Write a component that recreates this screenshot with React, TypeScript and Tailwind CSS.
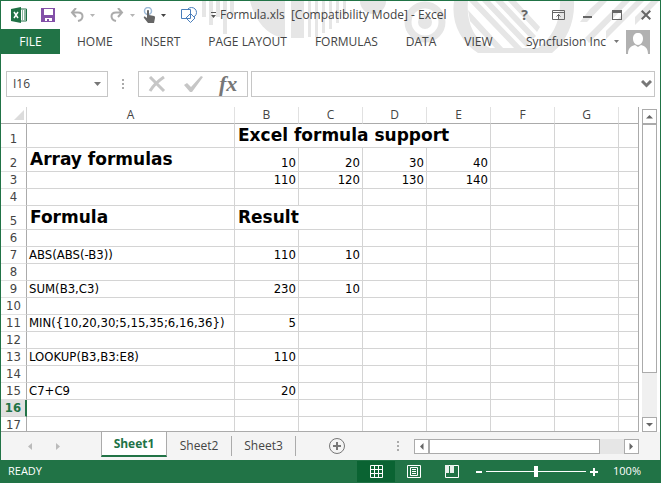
import type { ReactNode } from "react";

type Row = { n: number; h: string; cells: Record<string, string>; big?: string; from?: string; span?: number };

const COLS = ["A", "B", "C", "D", "E", "F", "G", ""];

const ROWS: Row[] = [
  { n: 1, h: "h-6", cells: { B: "Excel formula support" }, big: "B", from: "B", span: 4 },
  { n: 2, h: "h-6", cells: { A: "Array formulas", B: "10", C: "20", D: "30", E: "40" }, big: "A" },
  { n: 3, h: "h-[17px]", cells: { B: "110", C: "120", D: "130", E: "140" } },
  { n: 4, h: "h-[17px]", cells: {} },
  { n: 5, h: "h-6", cells: { A: "Formula", B: "Result" }, big: "AB", from: "B", span: 2 },
  { n: 6, h: "h-[17px]", cells: {} },
  { n: 7, h: "h-[17px]", cells: { A: "ABS(ABS(-B3))", B: "110", C: "10" } },
  { n: 8, h: "h-[17px]", cells: {} },
  { n: 9, h: "h-[17px]", cells: { A: "SUM(B3,C3)", B: "230", C: "10" } },
  { n: 10, h: "h-[17px]", cells: {} },
  { n: 11, h: "h-[17px]", cells: { A: "MIN({10,20,30;5,15,35;6,16,36})", B: "5" } },
  { n: 12, h: "h-[17px]", cells: {} },
  { n: 13, h: "h-[17px]", cells: { A: "LOOKUP(B3,B3:E8)", B: "110" } },
  { n: 14, h: "h-[17px]", cells: {} },
  { n: 15, h: "h-[17px]", cells: { A: "C7+C9", B: "20" } },
  { n: 16, h: "h-[17px]", cells: {} },
  { n: 17, h: "h-[17px]", cells: {} },
];

function SheetRow({ row }: { row: Row }) {
  const selected = row.n === 16;
  const cells: ReactNode[] = [];
  for (let i = 0; i < COLS.length; i++) {
    const col = COLS[i];
    const value = row.cells[col];
    const big = !!value && !!row.big?.includes(col);
    const span = row.from === col ? row.span ?? 1 : 1;
    cells.push(
      <td
        key={i}
        colSpan={span}
        className={`border-b border-[#d4d4d4] p-0 align-bottom whitespace-nowrap ${col ? "border-r" : ""}`}
      >
        <div
          className={
            big
              ? "px-[3px] font-['DejaVu_Sans',sans-serif] text-[17px] leading-[23px] font-bold"
              : col === "A"
                ? "px-0.5 text-[13px] leading-4"
                : "px-0.5 text-right text-[13px] leading-4"
          }
        >
          {value}
        </div>
      </td>,
    );
    i += span - 1;
  }
  return (
    <tr className={row.h}>
      <th
        scope="row"
        className={`border-b p-0 text-center align-bottom text-[13px] leading-4 ${
          selected
            ? "border-r-2 border-b-[#d4d4d4] border-r-[#217346] bg-[#e1e1e1] font-bold text-[#217346]"
            : "border-r border-b-[#e1e1e1] border-r-[#ababab] font-normal text-[#444]"
        }`}
      >
        {row.n}
      </th>
      {cells}
    </tr>
  );
}

function Decoration() {
  return (
    <svg className="absolute top-0 right-0 h-[52px] w-[460px]" viewBox="200 1 460 52" fill="#e6e6e6" aria-hidden="true">
      <path d="M202 1h4v16h-4zM209 1h4v24h-4zM216 1h4v16h-4zM223 1h4v33h-4zM230 1h4v14h-4z" />
      <path d="M250 1h35v37c-18-2-30-17-35-37zM291 1h13v37h-13z" />
      <path d="M308 1h3v36h-3zM315 1h3v36h-3zM322 1h3v32h-3zM329 1h3v28h-3zM336 1h3v22h-3zM343 1h3v15h-3z" />
      <circle cx="373" cy="1" r="13" />
      <circle cx="425" cy="22" r="17" fill="none" stroke="#e6e6e6" strokeWidth="7" />
      <circle cx="425" cy="22" r="7" />
      <path fillRule="evenodd" d="M454 1c-3 21 6 40 24 52h74c15-12 23-31 22-52h-14c1 20-8 37-22 47h-48c-17-9-24-27-22-47z" />
      <path d="M468 10l36 39h-8l-26-28zM469 1h8l46 48h-8zM482 1h8l40 42-4 4zM495 1h8l33 35-4 4zM508 1h8l24 26-3 5z" />
      <path d="M590 9l9-8h8l-20 21h-7zM585 38l37-37h8l-41 42zM606 31l30-30h8l-38 38zM635 17l16-16h8l-24 24z" />
    </svg>
  );
}

function Caret({ color }: { color: string }) {
  return (
    <svg className="h-[3px] w-[5px]" viewBox="0 0 5 3" aria-hidden="true">
      <path d="M0 0h5L2.5 3z" fill={color} />
    </svg>
  );
}

function TitleBar() {
  return (
    <header className="relative flex h-7 shrink-0 items-center pr-[9px] pl-2.5 text-[#444]">
      <svg className="h-4 w-4" viewBox="0 0 16 16" role="img" aria-label="Excel">
        <path d="M0 2l10-2v16L0 14z" fill="#1f7145" />
        <path d="M10 2h5.500v12H10" fill="#fff" stroke="#1f7145" />
        <path d="M11 4h1M13 4h2M11 6h1M13 6h2M11 8h1M13 8h2M11 10h1M13 10h2M11 12h1M13 12h2" stroke="#1f7145" />
        <path d="M3 5l4 6M7 5l-4 6" stroke="#fff" strokeWidth="1.500" />
      </svg>
      <button aria-label="Save" className="ml-3.5">
        <svg className="h-3.5 w-3.5" viewBox="0 0 14 14">
          <path d="M0 0h14v14H0z" fill="#8350a8" />
          <path d="M3 1h9v6H3zM4 10h7v3H8v-2H6v2H4z" fill="#fff" />
        </svg>
      </button>
      <button aria-label="Undo" className="ml-[15px]">
        <svg className="h-3.5 w-3.5" viewBox="0 0 14 14" fill="none" stroke="#ababab" strokeWidth="2">
          <path d="M6 0L2 4.500 6 9M2 4.500h6c6 0 6 7 0 8.500" />
        </svg>
      </button>
      <button aria-label="Undo list" className="ml-1.5"><Caret color="#b5b5b5" /></button>
      <button aria-label="Redo" className="ml-[15px]">
        <svg className="h-3.5 w-3.5" viewBox="0 0 14 14" fill="none" stroke="#ababab" strokeWidth="2">
          <path d="M8 0l4 4.500L8 9M12 4.500H6c-6 0-6 7 0 8.500" />
        </svg>
      </button>
      <button aria-label="Redo list" className="ml-1.5"><Caret color="#b5b5b5" /></button>
      <button aria-label="Touch mode" className="ml-2">
        <svg className="h-4 w-3" viewBox="0 0 12 16">
          <circle cx="5" cy="4" r="3.500" fill="none" stroke="#9db9d6" strokeWidth="1.500" />
          <path d="M4 4c0-1.300 2-1.300 2 0v4l5 1c1 .3 1 1 1 2l-1 5H5L1 11c-.8-1 .5-2 1.500-1L4 11z" fill="#666" />
        </svg>
      </button>
      <button aria-label="Touch mode list" className="ml-1.5"><Caret color="#444" /></button>
      <button aria-label="Shapes" className="ml-[15px]">
        <svg className="h-4 w-4" viewBox="0 0 16 16" fill="#fff" stroke="#4a7ebb">
          <circle cx="10.500" cy="5.500" r="5" />
          <path d="M.5 2.500h9v9h-9zM9.500 6.500l4.500 4.500-4.500 4.500L5 11z" />
        </svg>
      </button>
      <button aria-label="Customize toolbar" className="ml-3.5">
        <svg className="h-1.5 w-[5px]" viewBox="0 0 5 6"><path d="M0 0h5v1H0zM0 3h5L2.500 6z" fill="#555" /></svg>
      </button>
      <h1 className="ml-1 text-xs whitespace-pre">{"Formula.xls  [Compatibility Mode] - Excel"}</h1>
      <div className="ml-auto flex items-center text-[#666]">
        <button aria-label="Help" className="text-sm leading-4 font-bold">?</button>
        <button aria-label="Ribbon options" className="ml-6">
          <svg className="h-2.5 w-[13px]" viewBox="0 0 13 10" fill="none" stroke="#666">
            <path d="M.5.5h12v9H.5zM1 2.500h11M6.500 9V4M4.500 6.500l2-2 2 2" />
          </svg>
        </button>
        <button aria-label="Minimize" className="ml-[18px]">
          <svg className="h-2.5 w-[9px]" viewBox="0 0 9 10"><path d="M0 6h9v2H0z" fill="#666" /></svg>
        </button>
        <button aria-label="Maximize" className="ml-5">
          <svg className="h-2.5 w-2.5" viewBox="0 0 10 10"><path d="M0 0h10v10H0zM1 3v6h8V3z" fillRule="evenodd" fill="#666" /></svg>
        </button>
        <button aria-label="Close" className="ml-[19px]">
          <svg className="h-2.5 w-2.5" viewBox="0 0 10 10"><path d="M.7.7l8.600 8.600M9.300.7L.7 9.300" stroke="#666" strokeWidth="2" /></svg>
        </button>
      </div>
    </header>
  );
}

function Ribbon() {
  return (
    <nav aria-label="Ribbon" className="relative flex h-[25px] shrink-0 items-center pr-2.5 text-xs text-[#444]">
      <button className="h-full w-[59px] bg-[#217346] text-white">FILE</button>
      <button className="ml-[17px]">HOME</button>
      <button className="ml-7">INSERT</button>
      <button className="ml-7">PAGE LAYOUT</button>
      <button className="ml-7">FORMULAS</button>
      <button className="ml-7">DATA</button>
      <button className="ml-7">VIEW</button>
      <button className="ml-auto flex items-center gap-2">
        Syncfusion Inc <Caret color="#777" />
      </button>
      <svg className="ml-[7px] h-6 w-6" viewBox="0 0 24 24" role="img" aria-label="Account picture">
        <path d="M0 0h24v24H0z" fill="#b1b1b1" />
        <path d="M12 3c3 0 5 2 5 5.500S15 15 12 15s-5-3-5-6.500S9 3 12 3zM2 24c0-6 3-8 7-9l3 2 3-2c4 1 7 3 7 9z" fill="#fff" />
      </svg>
    </nav>
  );
}

function Dots() {
  return (
    <svg className="h-[11px] w-0.5" viewBox="0 0 2 11" aria-hidden="true"><path d="M0 0h2v2H0zM0 4h2v2H0zM0 8h2v2H0z" fill="#ababab" /></svg>
  );
}

function FormulaBar() {
  return (
    <div className="mt-[17px] flex h-[26px] shrink-0 items-stretch pr-[5px] pl-[5px]">
      <div className="flex w-[102px] items-center border border-[#c6c6c6] pr-1.5 pl-1.5">
        <input aria-label="Name box" defaultValue="I16" className="min-w-0 flex-1 text-xs text-[#444] outline-none" />
        <button aria-label="Name list"><svg className="h-1 w-[7px]" viewBox="0 0 7 4"><path d="M0 0h7L3.500 4z" fill="#777" /></svg></button>
      </div>
      <div className="flex w-[30px] items-center justify-center"><Dots /></div>
      <div className="flex w-[110px] items-center border border-[#c6c6c6] pl-[9px]">
        <button aria-label="Cancel">
          <svg className="h-4 w-[18px]" viewBox="0 0 18 16" fill="none" stroke="#c6c6c6" strokeWidth="3"><path d="M2 1l14 14M16 1C10 5 5 10 2 15" /></svg>
        </button>
        <button aria-label="Enter" className="ml-[18px]">
          <svg className="h-4 w-[19px]" viewBox="0 0 19 16" fill="#c6c6c6"><path d="M0 9l3-2 4 4 10-11 2 1L8 16H6z" /></svg>
        </button>
        <button aria-label="Insert function" className="ml-4 font-['Liberation_Serif',serif] text-[22px] leading-6 font-bold text-[#777] italic">fx</button>
      </div>
      <div className="ml-[3px] flex min-w-0 flex-1 items-center border border-[#c6c6c6] pr-0.5">
        <input aria-label="Formula" className="min-w-0 flex-1 px-1 text-xs outline-none" />
        <button aria-label="Expand formula bar">
          <svg className="h-2 w-[11px]" viewBox="0 0 11 8"><path d="M1 1l4.500 4.500L10 1" fill="none" stroke="#777" strokeWidth="3" /></svg>
        </button>
      </div>
    </div>
  );
}

function Arrow({ d, label, className }: { d: string; label: string; className: string }) {
  return (
    <button aria-label={label} className={`flex shrink-0 items-center justify-center bg-white ${className}`}>
      <svg className="h-[7px] w-[7px]" viewBox="0 0 7 7"><path d={d} fill="#666" /></svg>
    </button>
  );
}

function Sheet() {
  return (
    <main className="mt-2.5 flex min-h-0 flex-1">
      <div className="min-w-0 flex-1 overflow-hidden border-b border-[#ababab] bg-white">
        <table className="w-full table-fixed border-separate border-spacing-0 border-r border-[#ababab] font-['DejaVu_Sans_Condensed','Noto_Sans',sans-serif] text-black">
          <colgroup>
            <col className="w-[26px]" />
            <col className="w-52" />
            <col className="w-16" />
            <col className="w-16" />
            <col className="w-16" />
            <col className="w-16" />
            <col className="w-16" />
            <col className="w-16" />
            <col />
          </colgroup>
          <thead className="font-['Open_Sans',sans-serif] text-xs leading-4 text-[#444]">
            <tr className="h-[17px]">
              <th className="border-r border-b border-r-[#d4d4d4] border-b-[#ababab] p-0">
                <svg className="ml-auto h-3 w-3 pr-0.5" viewBox="0 0 10 10" aria-hidden="true"><path d="M10 0v10H0z" fill="#dcdcdc" /></svg>
              </th>
              {COLS.map((c, i) => (
                <th key={i} scope="col" className={`border-b border-r-[#e1e1e1] border-b-[#ababab] p-0 font-normal ${c ? "border-r" : ""}`}>{c}</th>
              ))}
            </tr>
          </thead>
          <tbody>{ROWS.map((r) => <SheetRow key={r.n} row={r} />)}</tbody>
        </table>
      </div>
      <div className="mt-0.5 mr-[3px] ml-[3px] flex w-[15px] flex-col bg-[#f0f0f0]">
        <Arrow label="Scroll up" d="M0 5.500L3.500 2 7 5.500z" className="h-[15px] border border-[#ababab]" />
        <div className="h-[249px] border border-[#ababab] bg-white" />
        <Arrow label="Scroll down" d="M0 2h7L3.500 5.500z" className="mt-auto h-[15px] border border-[#ababab]" />
      </div>
    </main>
  );
}

function SheetTabs() {
  return (
    <div className="flex h-7 shrink-0 bg-[#f4f4f4] pr-[21px] text-xs text-[#444]">
      <div className="flex w-[100px] items-center gap-6 pl-[27px]">
        <button aria-label="Previous sheet"><svg className="h-[7px] w-1" viewBox="0 0 4 7"><path d="M4 0v7L0 3.500z" fill="#bbb" /></svg></button>
        <button aria-label="Next sheet"><svg className="h-[7px] w-1" viewBox="0 0 4 7"><path d="M0 0v7l4-3.500z" fill="#bbb" /></svg></button>
      </div>
      <button className="mb-[3px] w-[66px] border-x border-b-2 border-x-[#ababab] border-b-[#217346] bg-white font-bold text-[#217346]">Sheet1</button>
      <button className="mt-1 mb-1 w-[65px] border-r border-[#ababab]">Sheet2</button>
      <button className="mt-1 mb-1 w-16 border-r border-[#ababab]">Sheet3</button>
      <button aria-label="New sheet" className="ml-[33px]">
        <svg className="h-4 w-4" viewBox="0 0 16 16" fill="none" stroke="#777"><circle cx="8" cy="8" r="7.500" /><path d="M8 4v8M4 8h8" strokeWidth="2" /></svg>
      </button>
      <div className="ml-auto flex w-[242px] items-center gap-[15px]">
        <Dots />
        <div className="flex h-[15px] flex-1 bg-[#e6e6e6]">
          <Arrow label="Scroll left" d="M5.500 0v7L2 3.500z" className="w-[15px] border border-[#ababab]" />
          <div className="w-[171px] border border-[#ababab] bg-white" />
          <Arrow label="Scroll right" d="M1.500 0v7L5 3.500z" className="ml-auto w-[15px] border border-[#ababab]" />
        </div>
      </div>
    </div>
  );
}

function StatusBar() {
  return (
    <footer className="flex h-[23px] shrink-0 items-center bg-[#217346] pr-[19px] pl-[7px] text-[11px] text-white">
      <span>READY</span>
      <button aria-label="Normal view" className="ml-auto flex h-[21px] w-[38px] items-center justify-center bg-[#0a6332]">
        <svg className="h-[13px] w-[13px]" viewBox="0 0 13 13" fill="none" stroke="#fff"><path d="M.5.5h12v12H.5zM4.500 0v13M8.500 0v13M0 4.500h13M0 8.500h13" /></svg>
      </button>
      <button aria-label="Page layout view" className="ml-3">
        <svg className="h-[13px] w-3.5" viewBox="0 0 14 13" fill="none" stroke="#fff"><path d="M.5.5h13v12H.5zM3.500 2.500h7v8h-7zM5 4.500h4M5 6.500h4M5 8.500h4" /></svg>
      </button>
      <button aria-label="Page break view" className="ml-6">
        <svg className="h-[13px] w-3.5" viewBox="0 0 14 13" fill="none" stroke="#fff"><path d="M.5.5h13v12H.5z" /><path d="M0 0h4v8H0zM5 0h4v8H5z" fill="#e8f0eb" stroke="none" /></svg>
      </button>
      <button aria-label="Zoom out" className="ml-[17px] h-0.5 w-1.5 bg-white" />
      <input
        type="range"
        aria-label="Zoom"
        defaultValue={50}
        className="mx-1 h-[11px] w-[100px] appearance-none bg-[linear-gradient(#fff,#fff)] bg-[length:100%_1px] bg-center bg-no-repeat [&::-webkit-slider-thumb]:h-[11px] [&::-webkit-slider-thumb]:w-1 [&::-webkit-slider-thumb]:appearance-none [&::-webkit-slider-thumb]:bg-white"
      />
      <button aria-label="Zoom in"><svg className="h-2 w-2" viewBox="0 0 8 8"><path d="M3 0h2v3h3v2H5v3H3V5H0V3h3z" fill="#fff" /></svg></button>
      <span className="ml-[15px]">100%</span>
    </footer>
  );
}

export default function App() {
  return (
    <div className="relative flex h-screen flex-col overflow-hidden border-x border-t border-[#217346] bg-white font-['Open_Sans','Noto_Sans',sans-serif]">
      <Decoration />
      <TitleBar />
      <Ribbon />
      <FormulaBar />
      <Sheet />
      <SheetTabs />
      <StatusBar />
    </div>
  );
}
